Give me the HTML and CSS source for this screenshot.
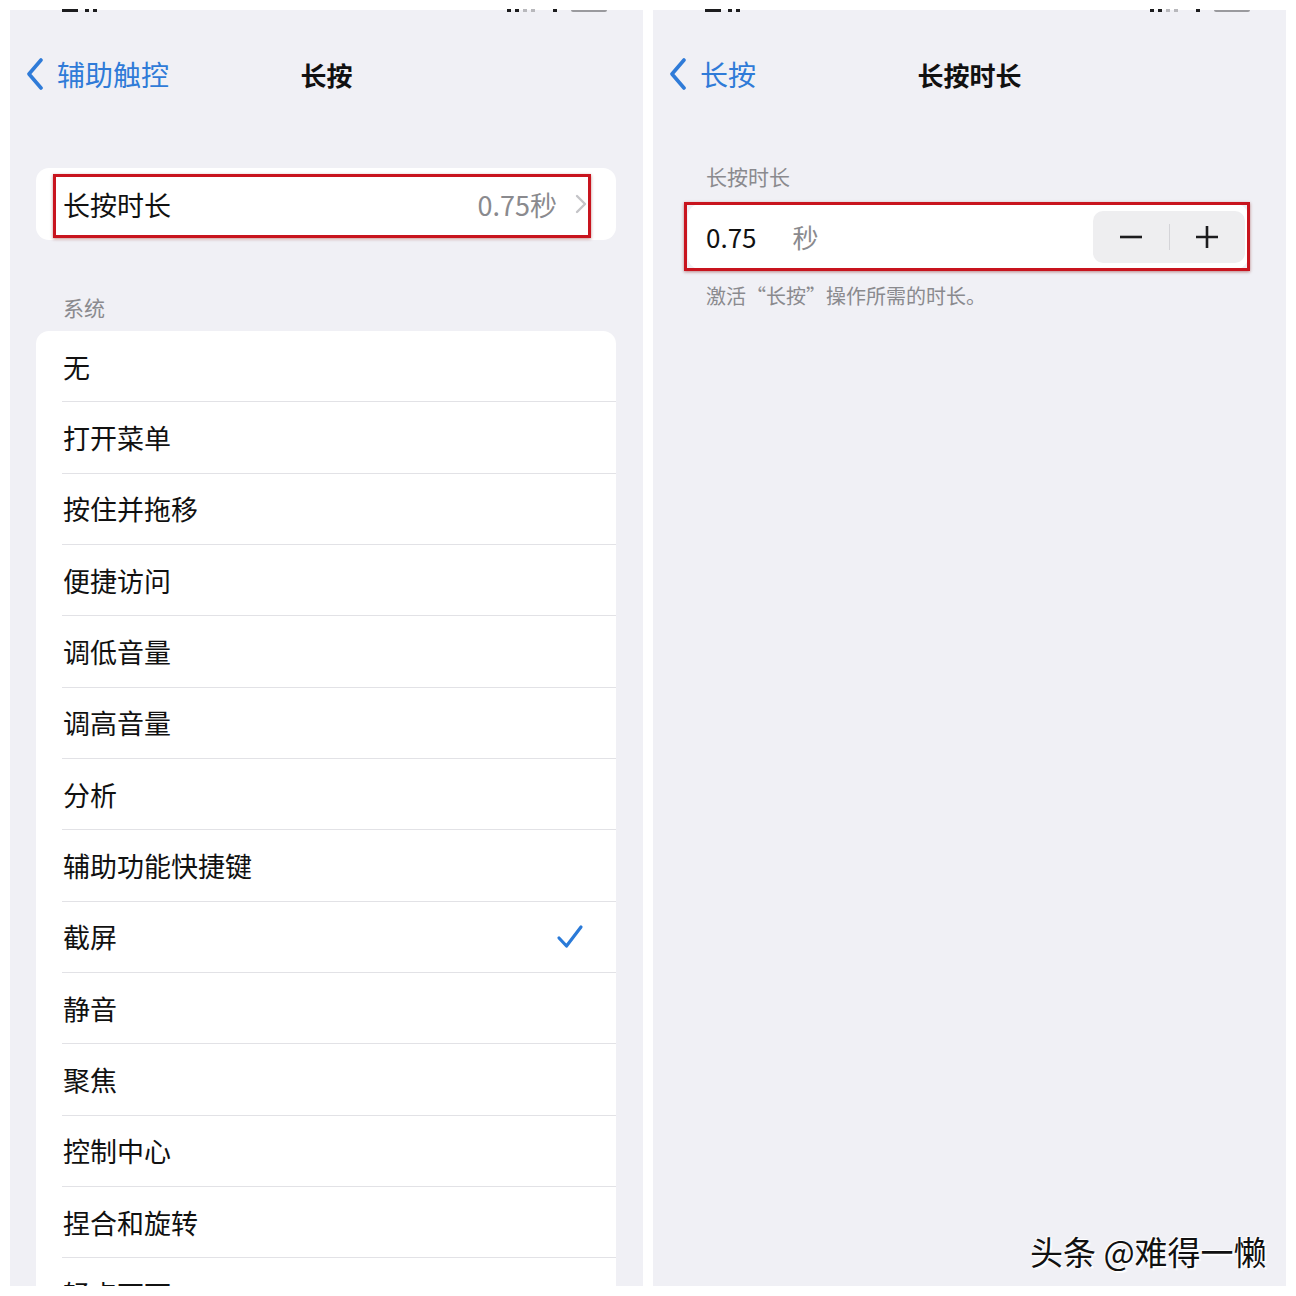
FILE: index.html
```html
<!DOCTYPE html>
<html lang="zh-CN">
<head>
    <meta charset="UTF-8">
    <meta name="viewport" content="width=device-width, initial-scale=1.0">
    <title>长按</title>
    <link rel="stylesheet" href="styles.css">
</head>
<body>
    <div class="page">
        <!-- left screen: 长按 -->
        <div class="panel">
            <div class="status">
                <span class="bit dash"></span><span class="bit dot"></span><span class="bit dot"></span>
                <span class="status-gap"></span>
                <span class="bit dot"></span><span class="bit dot"></span><span class="bit dot faint"></span><span class="bit dot faint"></span>
                <span class="bit dot wifi"></span>
                <span class="bit battery"></span>
            </div>
            <div class="nav">
                <a class="back">
                    <svg width="20" height="32" viewBox="0 0 20 32"><path d="M16 2 L4 16 L16 30" fill="none" stroke="#2f7bd8" stroke-width="3.6" stroke-linecap="round" stroke-linejoin="round"/></svg>
                    <span>辅助触控</span>
                </a>
                <h1 class="title">长按</h1>
                <span></span>
            </div>

            <div class="card single">
                <div class="row">
                    <span class="label">长按时长</span>
                    <span class="value">0.75秒</span>
                    <svg class="chevron" width="12" height="20" viewBox="0 0 12 20"><path d="M2 2 L10 10 L2 18" fill="none" stroke="#c4c4c8" stroke-width="2.4" stroke-linecap="round" stroke-linejoin="round"/></svg>
                </div>
                <div class="mark mark-left"></div>
            </div>

            <div class="section-header">系统</div>
            <div class="card list">
                <div class="row">无</div>
                <div class="row">打开菜单</div>
                <div class="row">按住并拖移</div>
                <div class="row">便捷访问</div>
                <div class="row">调低音量</div>
                <div class="row">调高音量</div>
                <div class="row">分析</div>
                <div class="row">辅助功能快捷键</div>
                <div class="row">
                    <span class="label">截屏</span>
                    <svg class="check" width="28" height="26" viewBox="0 0 28 26"><path d="M3 14 L10.5 22 L25 3" fill="none" stroke="#2a7ad8" stroke-width="3.2" stroke-linecap="round" stroke-linejoin="round"/></svg>
                </div>
                <div class="row">静音</div>
                <div class="row">聚焦</div>
                <div class="row">控制中心</div>
                <div class="row">捏合和旋转</div>
                <div class="row">轻点两下</div>
            </div>
        </div>

        <!-- right screen: 长按时长 -->
        <div class="panel">
            <div class="status">
                <span class="bit dash"></span><span class="bit dot"></span><span class="bit dot"></span>
                <span class="status-gap"></span>
                <span class="bit dot"></span><span class="bit dot"></span><span class="bit dot faint"></span><span class="bit dot faint"></span>
                <span class="bit dot wifi"></span>
                <span class="bit battery"></span>
            </div>
            <div class="nav">
                <a class="back">
                    <svg width="20" height="32" viewBox="0 0 20 32"><path d="M16 2 L4 16 L16 30" fill="none" stroke="#2f7bd8" stroke-width="3.6" stroke-linecap="round" stroke-linejoin="round"/></svg>
                    <span>长按</span>
                </a>
                <h1 class="title">长按时长</h1>
                <span></span>
            </div>

            <div class="detail">
                <div class="detail-header">长按时长</div>
                <div class="card stepper-card">
                    <span class="number">0.75</span>
                    <span class="unit">秒</span>
                    <div class="stepper">
                        <button class="step">
                            <svg width="26" height="26" viewBox="0 0 26 26"><path d="M2 13 H24" stroke="#1c1c1e" stroke-width="2.6"/></svg>
                        </button>
                        <span class="step-divider"></span>
                        <button class="step">
                            <svg width="26" height="26" viewBox="0 0 26 26"><path d="M2 13 H24 M13 2 V24" stroke="#1c1c1e" stroke-width="2.6"/></svg>
                        </button>
                    </div>
                    <div class="mark mark-right"></div>
                </div>
                <div class="detail-footer">激活“长按”操作所需的时长。</div>
            </div>
        </div>

        <div class="watermark">头条 @难得一懒</div>
    </div>
</body>
</html>
```

FILE: styles.css
```css
body {
    margin: 0;
    background: #fff;
    font-family: "Noto Sans CJK SC", "Noto Sans", sans-serif;
    color: #111;
}
.page {
    position: relative;
    display: flex;
    gap: 10px;
    padding: 0 10px;
    height: 1296px;
    overflow: hidden;
}
.panel {
    width: 633px;
    height: 1286px;
    background: #f0f0f5;
    overflow: hidden;
    display: flex;
    flex-direction: column;
}
.panel > * {
    flex-shrink: 0;
}
.status {
    height: 10px;
    background: #fff;
    display: flex;
    align-items: flex-end;
    padding-left: 52px;
    padding-right: 36px;
}
.bit {
    display: block;
    background: #1c1c1e;
    transform: translateY(2px);
    margin-right: 6px;
}
.dash {
    width: 16px;
    height: 3px;
    margin-right: 7px;
}
.dot {
    width: 4px;
    height: 3px;
    margin-right: 4px;
}
.dot.faint {
    background: #b8b8bc;
}
.dot.wifi {
    margin-left: 14px;
    margin-right: 14px;
}
.status-gap {
    flex: 1;
}
.battery {
    width: 36px;
    height: 2px;
    background: #9a9a9e;
    border-radius: 0 0 4px 4px;
    margin-right: 0;
}
.nav {
    height: 60px;
    margin-top: 34px;
    display: grid;
    grid-template-columns: 1fr auto 1fr;
    align-items: center;
    padding: 0 15px;
}
.back {
    display: flex;
    align-items: center;
    gap: 12px;
    color: #2f7bd8;
    font-size: 28px;
}
.title {
    margin: 0;
    font-size: 26px;
    font-weight: bold;
    color: #111;
}
.card {
    position: relative;
    background: #fff;
    border-radius: 13px;
    margin: 0 27px 0 26px;
}
.card.single {
    margin-top: 64px;
    height: 72px;
}
.card.single .row {
    height: 72px;
    border-bottom: none;
    padding-right: 29px;
}
.row {
    box-sizing: border-box;
    height: 71.33px;
    margin-left: 26px;
    padding-left: 1px;
    border-bottom: 1px solid #e2e2e6;
    display: flex;
    align-items: center;
    font-size: 27px;
    color: #111;
}
.label {
    flex: 1;
}
.value {
    color: #8a8a8e;
    margin-right: 18px;
}
.chevron {
    display: block;
}
.check {
    display: block;
    margin-right: 32px;
}
.section-header {
    margin: 53px 0 10px 53px;
    line-height: 28px;
    font-size: 21px;
    color: #8a8a8e;
}
.list {
    border-radius: 13px 13px 0 0;
}
.mark {
    position: absolute;
    box-sizing: border-box;
    border: 3px solid #c8141e;
    box-shadow: 0 1px 3px rgba(120, 0, 0, 0.45);
    pointer-events: none;
}
.mark-left {
    left: 17px;
    top: 6px;
    width: 538px;
    height: 64px;
}
.detail {
    padding: 0 38px 0 35px;
}
.detail-header {
    margin: 58px 0 14px 18px;
    line-height: 28px;
    font-size: 21px;
    color: #8a8a8e;
}
.stepper-card {
    margin: 0;
    height: 65px;
    border-radius: 12px;
    display: flex;
    align-items: center;
    padding-left: 18px;
    padding-right: 3px;
}
.number {
    font-size: 26px;
    color: #111;
}
.unit {
    margin-left: 36px;
    font-size: 26px;
    color: #8a8a8e;
}
.stepper {
    margin-left: auto;
    width: 152px;
    height: 52px;
    background: #eeeef0;
    border-radius: 10px;
    display: flex;
    align-items: center;
}
.step {
    flex: 1;
    height: 52px;
    border: none;
    background: none;
    padding: 0;
    display: flex;
    align-items: center;
    justify-content: center;
}
.step-divider {
    width: 1px;
    height: 26px;
    background: #d4d4d8;
}
.mark-right {
    left: -4px;
    top: -2px;
    width: 566px;
    height: 69px;
}
.detail-footer {
    margin: 13px 0 0 18px;
    line-height: 28px;
    font-size: 20px;
    color: #8a8a8e;
}
.watermark {
    position: absolute;
    left: 1030px;
    top: 1227px;
    font-size: 33px;
    color: #111;
    text-shadow: -1px -1px 0 #fff, 1px 1px 0 #fff, 2px 2px 1px rgba(255, 255, 255, 0.8);
}
```
